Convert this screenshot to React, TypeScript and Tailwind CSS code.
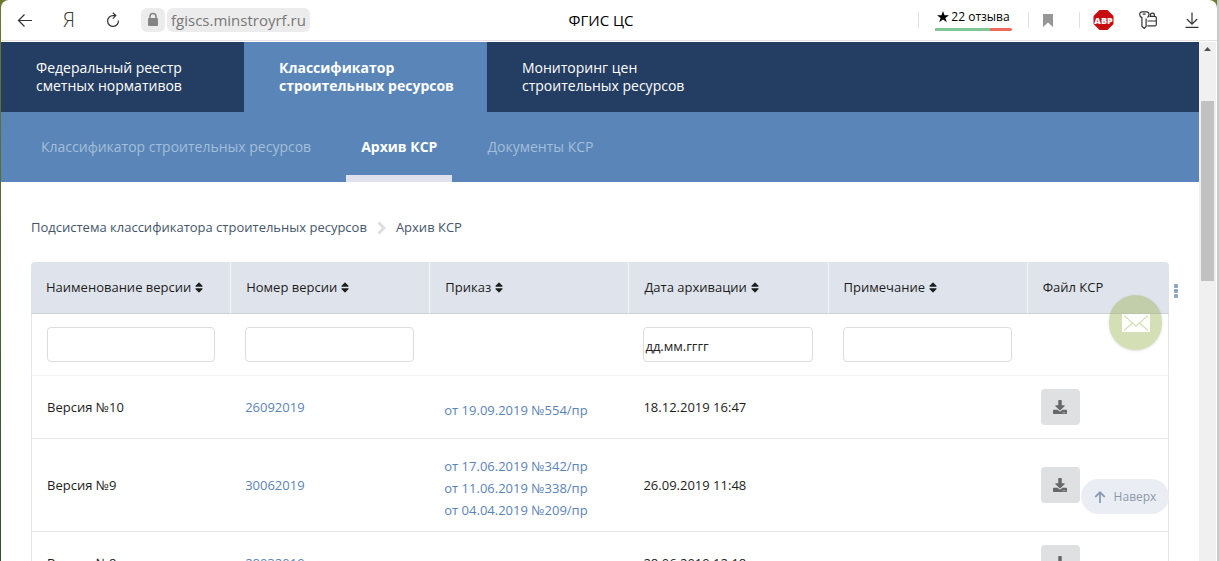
import React from 'react';
import { FaDownload, FaSort } from 'react-icons/fa';

const sections = [
  { lines: ['Федеральный реестр', 'сметных нормативов'], active: false },
  { lines: ['Классификатор', 'строительных ресурсов'], active: true },
  { lines: ['Мониторинг цен', 'строительных ресурсов'], active: false },
];

const subsections = [
  { title: 'Классификатор строительных ресурсов', active: false },
  { title: 'Архив КСР', active: true },
  { title: 'Документы КСР', active: false },
];

const columns = [
  { title: 'Наименование версии', filter: 'text' },
  { title: 'Номер версии', filter: 'text' },
  { title: 'Приказ', filter: null },
  { title: 'Дата архивации', filter: 'date' },
  { title: 'Примечание', filter: 'text' },
];

const versions = [
  {
    name: 'Версия №10',
    number: '26092019',
    orders: ['от 19.09.2019 №554/пр'],
    archived: '18.12.2019 16:47',
  },
  {
    name: 'Версия №9',
    number: '30062019',
    orders: ['от 17.06.2019 №342/пр', 'от 11.06.2019 №338/пр', 'от 04.04.2019 №209/пр'],
    archived: '26.09.2019 11:48',
  },
  {
    name: 'Версия №8',
    number: '28032019',
    orders: ['от 28.03.2019 №182/пр'],
    archived: '28.06.2019 12:18',
  },
];

const BrowserBar: React.FC = () => (
  <div className="flex h-[41px] shrink-0 items-center rounded-t-lg border-b border-[#e4e4e4] bg-white pr-[18px] pl-4 text-[#333]">
    <div className="flex flex-1 items-center">
      <button type="button" aria-label="Назад">
        <svg className="h-4 w-4" viewBox="0 0 16 16" fill="none" stroke="currentColor" strokeWidth="1.2">
          <path d="M15 8.5H1.5M7.5 2.5l-6 6 6 6" />
        </svg>
      </button>
      <button type="button" aria-label="Яндекс" className="ml-[30px] w-3 text-xl leading-6 font-light">
        Я
      </button>
      <button type="button" aria-label="Обновить" className="ml-[30px]">
        <svg className="h-4 w-4" viewBox="0 0 16 16" fill="none" stroke="currentColor" strokeWidth="1.2">
          <path d="M13.4 8.5A5.4 5.4 0 1 1 8 3.6h2.500M7.800.8l3 2.800-3 3" />
        </svg>
      </button>
      <div className="ml-5 flex h-6 w-6 items-center justify-center rounded-md bg-[#ececec]">
        <svg className="h-4 w-3" viewBox="0 0 12 16">
          <path d="M3 7V4.5a3 3 0 0 1 6 0V7" fill="none" stroke="#858585" strokeWidth="1.5" />
          <rect x="1" y="6" width="10" height="8" rx="1" fill="#858585" />
        </svg>
      </div>
      <div className="ml-0.5 flex h-6 items-center rounded-md bg-[#ececec] px-1 text-[15px] leading-6 text-[#777]">
        fgiscs.minstroyrf.ru
      </div>
    </div>
    <div className="pr-3.5 text-[15px] text-black">ФГИС ЦС</div>
    <div className="flex flex-1 items-center justify-end">
      <span className="h-4 w-px bg-[#e0e0e0]" />
      <button type="button" className="ml-4 flex w-[77px] flex-col">
        <span className="flex h-[18px] w-full items-center justify-center gap-0.5 pb-1 text-xs whitespace-nowrap text-black">
          <svg className="h-3 w-3 shrink-0" viewBox="0 0 12 12">
            <path d="M6 0l1.5 4.2H12L8.400 6.900 9.800 11.300 6 8.600 2.200 11.300 3.600 6.900 0 4.200h4.500z" />
          </svg>
          22 отзыва
        </span>
        <span className="flex h-[3px] w-full overflow-hidden rounded-full bg-[#f0695a]">
          <span className="w-[71%] bg-[#7cc794]" />
        </span>
      </button>
      <span className="ml-4 h-4 w-px bg-[#e0e0e0]" />
      <button type="button" aria-label="Закладки" className="ml-[14px]">
        <svg className="h-3.5 w-2.5" viewBox="0 0 10 14">
          <path d="M0 1h10v13L5 9.500 0 14z" fill="#979797" />
        </svg>
      </button>
      <span className="ml-[26px] h-4 w-px bg-[#e0e0e0]" />
      <button type="button" aria-label="Adblock Plus" className="ml-[13px]">
        <svg className="h-5 w-[21px]" viewBox="0 0 20 20">
          <path d="M6 0h8l6 6v8l-6 6H6l-6-6V6z" fill="#c70d0f" />
          <text x="10" y="13.500" textAnchor="middle" fontFamily="Open Sans, sans-serif" fontSize="9" fontWeight="800" fill="#fff">ABP</text>
        </svg>
      </button>
      <button type="button" aria-label="Пароли" className="ml-[25px]">
        <svg className="h-[18px] w-[18px]" viewBox="0 0 18 18" fill="none" stroke="currentColor" strokeWidth="1.200">
          <path d="M8.500 6.500C9.500 5.800 10 4.800 10 3.600 10 1.800 9.200.8 7.800.8H3C1.500.8.700 1.800.700 3.500c0 1.400.800 2.500 2.200 3.100v8.600l2.300 2.200 1.900-1.900V7.500M3.800 3.200h2.800" />
          <path d="M8.300 14.900h7.500c.900 0 1.500-.600 1.500-1.500V6.800c0-.900-.600-1.500-1.500-1.500H10.500M8.500 10h8.800M11.500 5.300V3.800c0-1.100.700-1.600 1.900-1.600s2 .600 2 1.700v1.400" />
        </svg>
      </button>
      <button type="button" aria-label="Загрузки" className="ml-7">
        <svg className="h-4 w-[14px]" viewBox="0 0 14 16" fill="none" stroke="currentColor" strokeWidth="1.200">
          <path d="M7 .500v11.500M1.800 7L7 12.200 12.200 7M.500 15.300h13" />
        </svg>
      </button>
    </div>
  </div>
);

const FilterCell: React.FC<{ title: string; filter: string | null }> = ({ title, filter }) => (
  <td className="px-[15px] py-[13px]">
    {filter && (
      <input
        type="text"
        aria-label={title}
        placeholder={filter === 'date' ? 'дд.мм.гггг' : undefined}
        className="block h-[35px] w-full rounded border border-[#dcdcdc] bg-white px-px pt-0.5 text-[13px] outline-none placeholder:text-[#222]"
      />
    )}
  </td>
);

const ArchiveTable: React.FC = () => (
  <table className="w-full table-fixed border-separate border-spacing-0 text-left text-[13px] text-[#1d1d1d]">
    <thead className="bg-[#dfe3ec]">
      <tr>
        {columns.map((column, i) => (
          <th
            key={column.title}
            scope="col"
            className={`h-[52px] w-[17.5%] border-b border-b-[#cdd2db] px-[15px] font-medium ${i === 0 ? 'rounded-tl' : 'border-l border-l-[#f4f6fa]'}`}
          >
            <button type="button" className="flex items-center gap-1">
              {column.title}
              <FaSort className="h-[13px] w-2" />
            </button>
          </th>
        ))}
        <th scope="col" className="h-[52px] rounded-tr border-b border-l border-b-[#cdd2db] border-l-[#f4f6fa] px-[15px] font-medium">
          Файл КСР
        </th>
      </tr>
    </thead>
    <tbody className="[&_td]:border-b [&_td]:border-[#e3e6ea] [&_td:first-child]:border-l [&_td:last-child]:border-r">
      <tr className="[&>td]:border-b-[#f2f3f5]">
        {columns.map((column) => (
          <FilterCell key={column.title} title={column.title} filter={column.filter} />
        ))}
        <td />
      </tr>
      {versions.map((version) => (
        <tr key={version.number}>
          <td className="px-[15px] pt-0.5">{version.name}</td>
          <td className="px-[15px] pt-0.5">
            <a href="#" className="text-[#5c83b8]">{version.number}</a>
          </td>
          <td className="px-[15px] pt-4 pb-[10px]">
            {version.orders.map((order) => (
              <a key={order} href="#" className="block leading-[22px] text-[#5c83b8]">{order}</a>
            ))}
          </td>
          <td className="px-[15px] pt-0.5">{version.archived}</td>
          <td />
          <td className="px-[14px] py-[13px]">
            <button
              type="button"
              aria-label={`Скачать: ${version.name}`}
              className="flex h-9 w-[39px] items-center justify-center rounded bg-[#dfe0e1] text-[#666968]"
            >
              <FaDownload className="h-3.5 w-3.5" />
            </button>
          </td>
        </tr>
      ))}
    </tbody>
  </table>
);

const App: React.FC = () => {
  return (
    <div className="h-screen overflow-hidden bg-linear-to-b from-[#6a7a2f] to-[#2f4f2f] pl-px font-['Open_Sans','Noto_Sans',sans-serif]">
      <div className="flex h-full flex-col border-r-2 border-[#c9c9c9]">
        <BrowserBar />
        <div className="flex min-h-0 flex-1 bg-white pt-px pr-px">
          <div className="relative min-w-0 flex-1 overflow-hidden">
            <nav className="flex h-[70px] bg-[#243d62] text-sm leading-[18px] text-white">
              {sections.map((section) => (
                <a
                  key={section.lines[0]}
                  href="#"
                  className={`flex w-[243px] flex-col justify-center px-[35px] whitespace-nowrap ${section.active ? 'bg-[#5a85b8] font-bold' : ''}`}
                >
                  {section.lines.map((line) => (
                    <span key={line}>{line}</span>
                  ))}
                </a>
              ))}
            </nav>
            <nav className="flex h-[70px] gap-5 bg-[#5a85b8] pl-[25px] text-sm">
              {subsections.map((item) => (
                <a
                  key={item.title}
                  href="#"
                  className={`flex items-center border-y-[7px] border-transparent px-[15px] ${item.active ? 'border-b-[#dfe1ec] font-bold text-white' : 'text-[#a3bfd9]'}`}
                >
                  {item.title}
                </a>
              ))}
            </nav>
            <main className="px-[30px]">
              <div className="flex h-20 items-center gap-[10px] pt-3 text-[13px] text-[#46556a]">
                <a href="#">Подсистема классификатора строительных ресурсов</a>
                <svg className="h-3.5 w-[9px]" viewBox="0 0 9 14" fill="none" stroke="#dedede" strokeWidth="3">
                  <path d="M1.500 1.500L7 7l-5.500 5.500" />
                </svg>
                <span>Архив КСР</span>
              </div>
              <div className="relative">
                <ArchiveTable />
                <button type="button" aria-label="Меню таблицы" className="absolute top-[22px] -right-[9px] flex flex-col gap-px">
                  <span className="h-1 w-1 rounded-[1px] bg-[#8fa5c2]" />
                  <span className="h-1 w-1 rounded-[1px] bg-[#8fa5c2]" />
                  <span className="h-1 w-1 rounded-[1px] bg-[#8fa5c2]" />
                </button>
              </div>
            </main>
            <button
              type="button"
              aria-label="Написать"
              className="absolute top-[253px] right-[37px] flex h-[55px] w-[53px] items-center justify-center rounded-full bg-[#96af46]/40 shadow-sm"
            >
              <svg className="h-[18px] w-7" viewBox="0 0 28 18" fill="none" stroke="#d5dfb5" strokeWidth="1.200">
                <path d="M0 0h28v18H0z" fill="#fff" stroke="none" />
                <path d="M2 1.500l12 10.500L26 1.500M2 16.500l8.500-7.500M26 16.500L17.500 9" />
              </svg>
            </button>
            <button
              type="button"
              className="absolute right-[30px] bottom-[47px] flex h-[35px] w-[88px] items-center justify-center gap-2 rounded-full bg-[#eaeef4] text-xs text-[#8c99aa]"
            >
              <svg className="h-3 w-3" viewBox="0 0 12 12" fill="none" stroke="#8a9db5" strokeWidth="1.800">
                <path d="M6 12V1.500M1.200 6L6 1.300 10.800 6" />
              </svg>
              Наверх
            </button>
          </div>
          <div className="flex w-[17px] flex-col items-center bg-[#f0f0f0]" aria-hidden="true">
            <svg className="mt-[5px] h-1 w-[7px]" viewBox="0 0 7 4">
              <path d="M3.500 0L7 4H0z" fill="#505050" />
            </svg>
            <div className="mt-[50px] h-[180px] w-[13px] bg-[#c1c1c1]" />
          </div>
        </div>
      </div>
    </div>
  );
};

export default App;
